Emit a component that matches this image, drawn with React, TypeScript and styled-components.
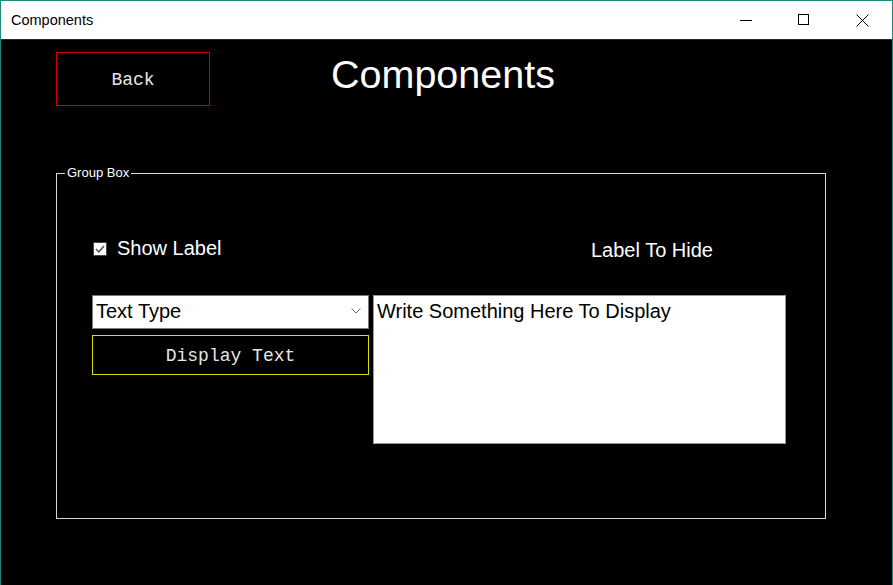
import React from "react";
import styled, { createGlobalStyle } from "styled-components";

const Global = createGlobalStyle`
  html, body { margin: 0; padding: 0; background: #000; }
  * { box-sizing: border-box; }
`;

const Window = styled.div`
  width: 893px;
  height: 585px;
  display: flex;
  flex-direction: column;
  background: #000;
  border: 1px solid #1a8a7a;
  border-bottom: none;
  overflow: hidden;
`;

const TitleBar = styled.div`
  height: 39px;
  flex: none;
  display: flex;
  align-items: center;
  background: #fff;
  border-bottom: 1px solid #2b2b2b;
`;

const TitleText = styled.div`
  flex: 1;
  padding-left: 10px;
  font-family: "Liberation Sans", Arial, sans-serif;
  font-size: 14.5px;
  color: #000;
`;

const CaptionButton = styled.div`
  width: 58px;
  height: 38px;
  display: flex;
  align-items: center;
  justify-content: center;
  color: #000;
`;

const Content = styled.div`
  flex: 1;
  padding: 12px 0 0 55px;
  display: flex;
  flex-direction: column;
`;

const Header = styled.div`
  display: flex;
  align-items: flex-start;
`;

const BackButton = styled.div`
  width: 154px;
  height: 54px;
  border: 1px solid #cc0000;
  display: flex;
  align-items: center;
  justify-content: center;
  font-family: "Liberation Mono", "DejaVu Sans Mono", monospace;
  font-size: 18px;
  color: #e6e6e6;
  padding-top: 1px;
`;

const Heading = styled.h1`
  margin: 2px 0 0 121px;
  font-family: "Liberation Sans", Arial, sans-serif;
  font-weight: normal;
  font-size: 39.5px;
  line-height: 40px;
  color: #fff;
`;

const GroupBox = styled.fieldset`
  margin: 60px 0 0 0;
  padding: 0;
  width: 770px;
  height: 353px;
  border: 1px solid #d8d8d8;
  min-width: 0;
`;

const Legend = styled.legend`
  margin-left: 8px;
  padding: 0 2px;
  font-family: "Liberation Sans", Arial, sans-serif;
  font-size: 13px;
  line-height: 14px;
  color: #fff;
`;

const GroupBody = styled.div`
  padding-left: 35px;
`;

const TopRow = styled.div`
  margin-top: 55px;
  display: grid;
  grid-template-columns: 499px auto;
  align-items: center;
  height: 24px;
`;

const CheckLabel = styled.label`
  display: flex;
  align-items: center;
  gap: 10px;
  padding-left: 1px;
  font-family: "Liberation Sans", Arial, sans-serif;
  font-size: 20px;
  color: #fff;
`;

const CheckBox = styled.span`
  width: 14px;
  height: 14px;
  flex: none;
  background: #fff;
  border: 1px solid #444;
  display: flex;
  align-items: center;
  justify-content: center;
`;

const PlainLabel = styled.div`
  font-family: "Liberation Sans", Arial, sans-serif;
  font-size: 20px;
  color: #fff;
  padding-top: 4px;
`;

const FormRow = styled.div`
  margin-top: 36px;
  display: grid;
  grid-template-columns: 277px 413px;
  column-gap: 4px;
  align-items: start;
`;

const LeftCol = styled.div`
  display: flex;
  flex-direction: column;
  gap: 6px;
`;

const ComboBox = styled.div`
  height: 34px;
  background: #fff;
  border: 1px solid #7a7a7a;
  display: flex;
  align-items: flex-start;
  justify-content: space-between;
  padding: 4px 7px 0 3px;
  font-family: "Liberation Sans", Arial, sans-serif;
  font-size: 20px;
  line-height: 23px;
  color: #000;
`;

const Chevron = styled.svg`
  margin-top: 8px;
`;

const DisplayButton = styled.div`
  height: 40px;
  border: 1px solid #dede00;
  display: flex;
  align-items: center;
  justify-content: center;
  font-family: "Liberation Mono", "DejaVu Sans Mono", monospace;
  font-size: 18px;
  color: #e6e6e6;
  padding-top: 1px;
`;

const TextArea = styled.textarea`
  width: 413px;
  height: 149px;
  margin: 0;
  resize: none;
  background: #fff;
  border: 1px solid #999;
  outline: none;
  padding: 4px 3px;
  font-family: "Liberation Sans", Arial, sans-serif;
  font-size: 20px;
  line-height: 23px;
  color: #000;
  overflow: hidden;
`;

export default function App() {
  return (
    <>
      <Global />
      <Window>
        <TitleBar>
          <TitleText>Components</TitleText>
          <CaptionButton>
            <svg width="13" height="13" viewBox="0 0 13 13">
              <line x1="0" y1="6.5" x2="12" y2="6.5" stroke="#000" strokeWidth="1" />
            </svg>
          </CaptionButton>
          <CaptionButton>
            <svg width="12" height="12" viewBox="0 0 12 12">
              <rect x="0.5" y="0.5" width="10" height="10" fill="none" stroke="#000" strokeWidth="1" />
            </svg>
          </CaptionButton>
          <CaptionButton style={{ marginRight: 1 }}>
            <svg width="13" height="13" viewBox="0 0 13 13">
              <path d="M0.5 0.5 L12.5 12.5 M12.5 0.5 L0.5 12.5" stroke="#000" strokeWidth="1" />
            </svg>
          </CaptionButton>
        </TitleBar>
        <Content>
          <Header>
            <BackButton>Back</BackButton>
            <Heading>Components</Heading>
          </Header>
          <GroupBox>
            <Legend>Group Box</Legend>
            <GroupBody>
              <TopRow>
                <CheckLabel>
                  <CheckBox>
                    <svg width="12" height="12" viewBox="0 0 12 12">
                      <path d="M2 6 L4.8 8.8 L10 3" fill="none" stroke="#555" strokeWidth="1.5" />
                    </svg>
                  </CheckBox>
                  Show Label
                </CheckLabel>
                <PlainLabel>Label To Hide</PlainLabel>
              </TopRow>
              <FormRow>
                <LeftCol>
                  <ComboBox>
                    <span>Text Type</span>
                    <Chevron width="10" height="6" viewBox="0 0 10 6">
                      <path d="M0.5 0.5 L5 5 L9.5 0.5" fill="none" stroke="#666" strokeWidth="1" />
                    </Chevron>
                  </ComboBox>
                  <DisplayButton>Display Text</DisplayButton>
                </LeftCol>
                <TextArea defaultValue="Write Something Here To Display" spellCheck={false} />
              </FormRow>
            </GroupBody>
          </GroupBox>
        </Content>
      </Window>
    </>
  );
}
